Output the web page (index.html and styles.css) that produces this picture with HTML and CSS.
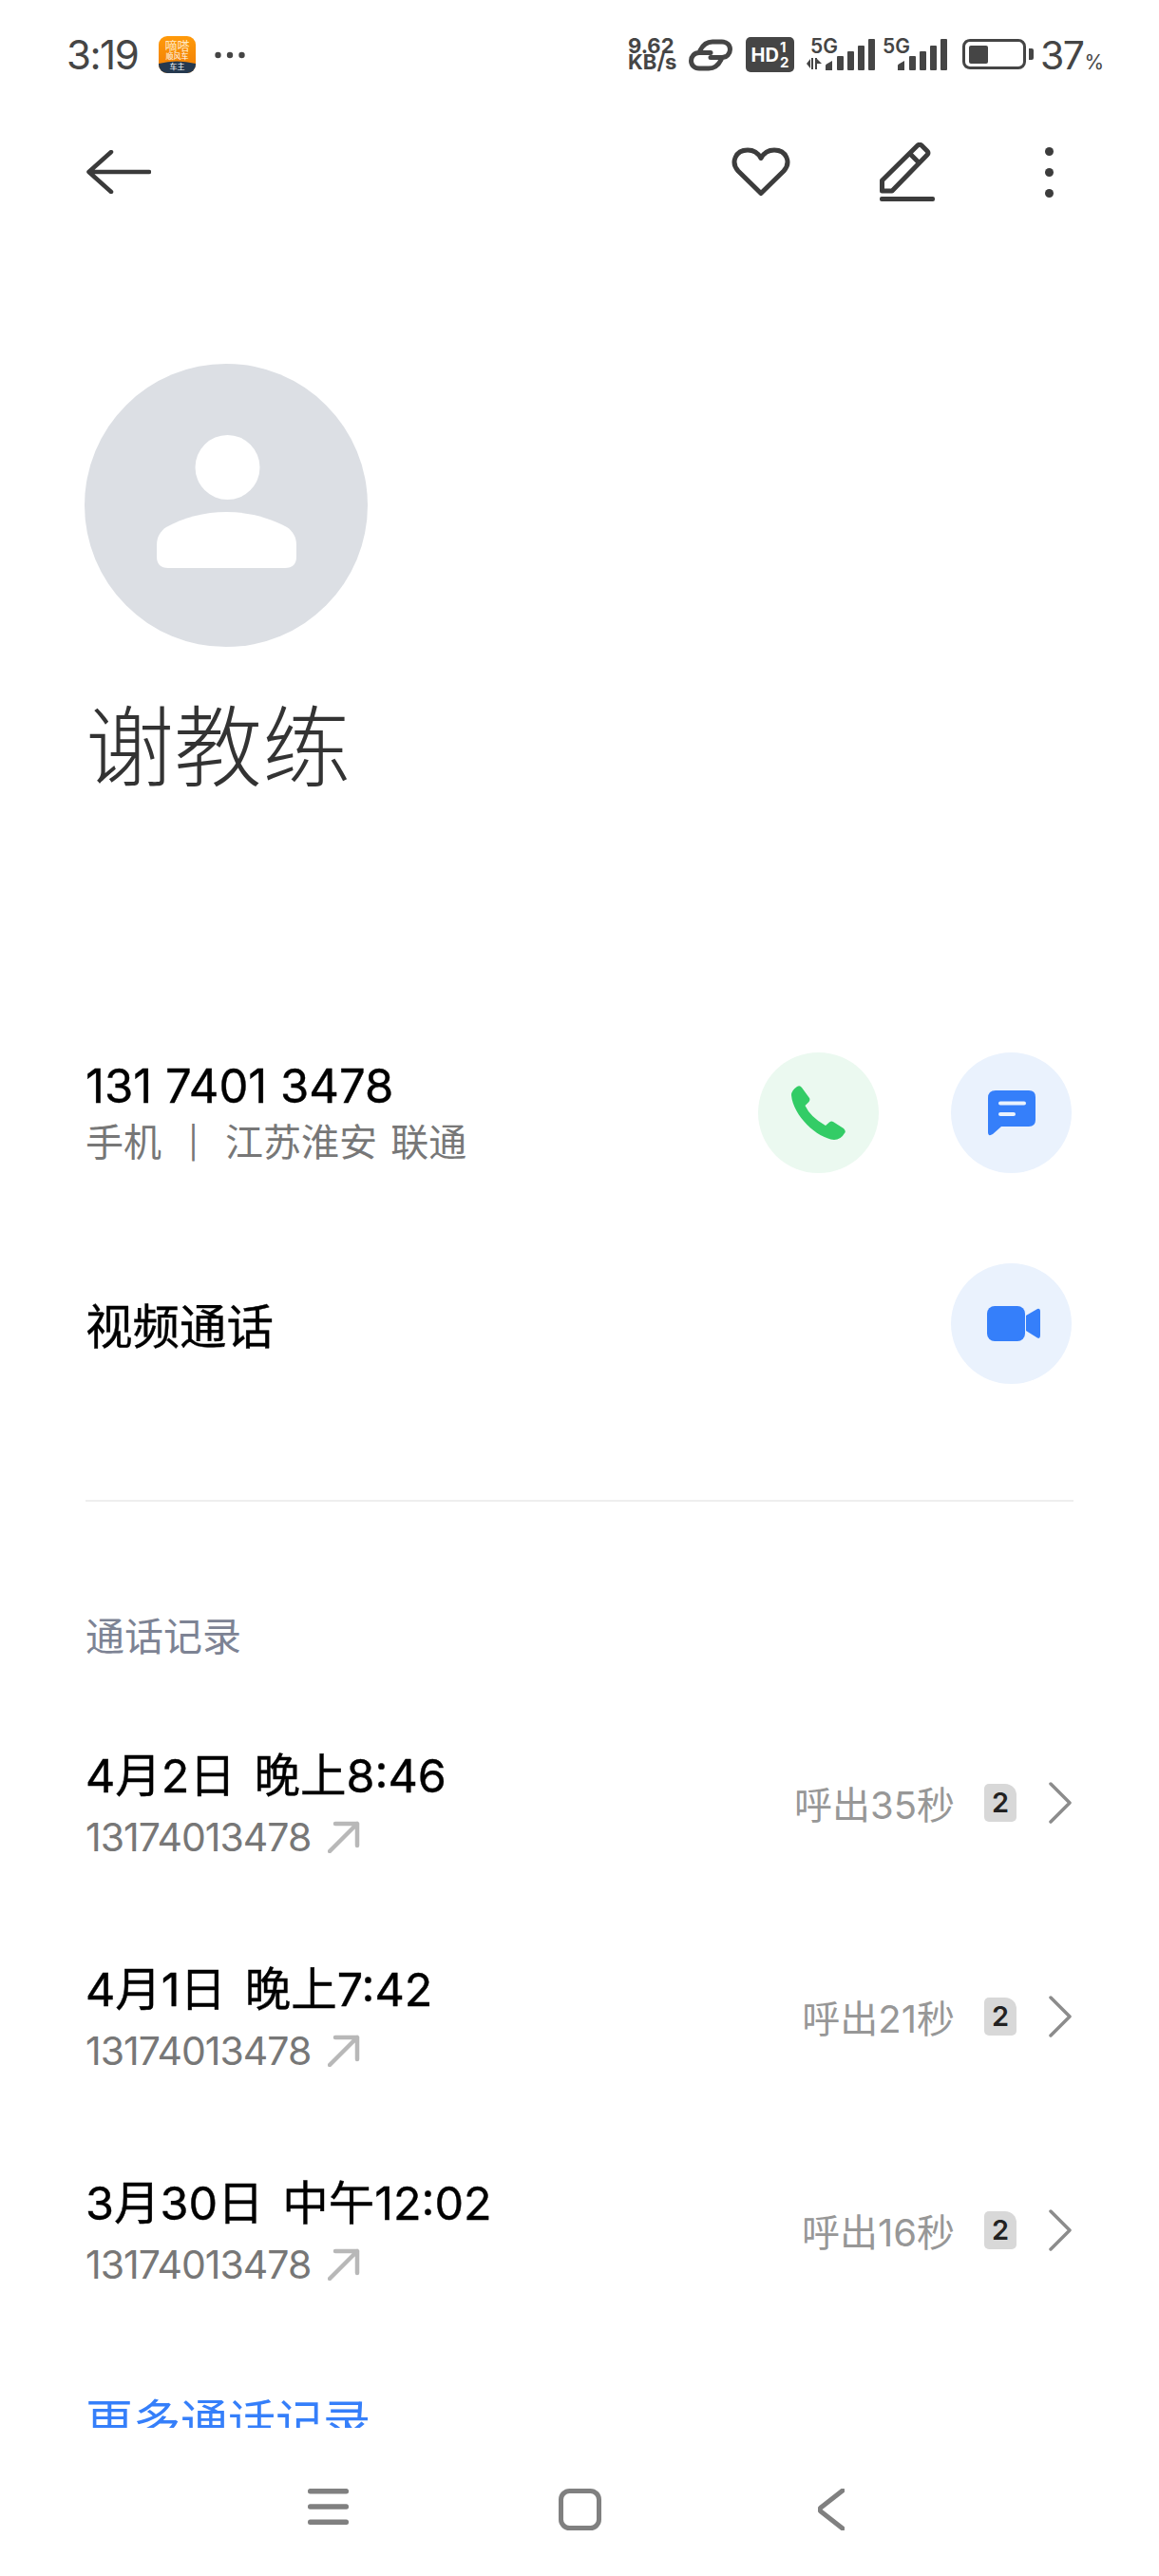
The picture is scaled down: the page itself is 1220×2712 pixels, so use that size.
FILE: index.html
```html
<!DOCTYPE html>
<html lang="zh-CN">
  <head>
    <meta charset="UTF-8">
    <title>谢教练</title>
    <link rel="stylesheet" href="styles.css">
  </head>
  <body>
    <div class="phone">

      <!-- status bar -->
      <div class="status">
        <div class="statusLeft">
          <span class="clock">3:19</span>
          <svg class="appIcon" width="39" height="39" viewBox="0 0 39 39">
            <defs>
              <linearGradient id="appBg" x1="0" y1="0" x2="0" y2="1">
                <stop offset="0" stop-color="#ff9a0a"/>
                <stop offset="1" stop-color="#ef7d04"/>
              </linearGradient>
              <clipPath id="appClip"><rect width="39" height="39" rx="9"/></clipPath>
            </defs>
            <g clip-path="url(#appClip)">
              <rect width="39" height="39" fill="url(#appBg)"/>
              <path d="M0 29 Q19 24 39 29 V39 H0Z" fill="#25394f"/>
            </g>
            <text class="appText" x="19.500" y="15" font-size="13" fill="#ffe9c4">嘀嗒</text>
            <text class="appText" x="19.500" y="24" font-size="8" fill="#fff">顺风车</text>
            <text class="appText" x="19.500" y="35" font-size="8" fill="#fff">车主</text>
          </svg>
          <svg class="moreDots" width="32" height="8" viewBox="0 0 32 8" fill="#454545">
            <circle cx="3.500" cy="4" r="3.200"/><circle cx="16" cy="4" r="3.200"/><circle cx="28.500" cy="4" r="3.200"/>
          </svg>
        </div>
        <div class="statusRight">
          <div class="speed">9.62 KB/s</div>
          <svg class="linkIcon" width="46" height="34" viewBox="0 0 46 34" fill="none" stroke="#454545" stroke-width="5" stroke-linecap="round">
            <path d="M12 12 C15 6 19 3 25 3 H35 C40 3 43.500 6.500 43.500 11 C43.500 15.500 40 19.500 35 19.500 H23"/>
            <path d="M34 22 C31 28 27 31 21 31 H11 C6 31 2.500 27.500 2.500 23 C2.500 18.500 6 14.500 11 14.500 H23"/>
          </svg>
          <div class="hd"><span class="hdText">HD</span><span class="hdNums"><i>1</i><i>2</i></span></div>
          <div class="sig">
            <span class="fiveG">5G</span>
            <svg class="updown" width="16" height="12" viewBox="0 0 16 12" fill="#454545">
              <path d="M0 6 L4 1 V11Z"/><rect x="5" y="0" width="2" height="12"/><rect x="9" y="0" width="2" height="12"/><path d="M11 1 L16 6 H11Z"/>
            </svg>
            <svg class="bars" width="52" height="33" viewBox="0 0 52 33" fill="#454545">
              <path d="M0 33 V28 Q0 27 1 26.500 L7 23 V33Z"/><rect x="12" y="18" width="7" height="15" rx="1"/><rect x="23" y="13" width="7" height="20" rx="1"/><rect x="34" y="7" width="7" height="26" rx="1"/><rect x="45" y="0" width="7" height="33" rx="1"/>
            </svg>
          </div>
          <div class="sig sigTwo">
            <span class="fiveG">5G</span>
            <svg class="bars" width="52" height="33" viewBox="0 0 52 33" fill="#454545">
              <path d="M0 33 V28 Q0 27 1 26.500 L7 23 V33Z"/><rect x="12" y="18" width="7" height="15" rx="1"/><rect x="23" y="13" width="7" height="20" rx="1"/><rect x="34" y="7" width="7" height="26" rx="1"/><rect x="45" y="0" width="7" height="33" rx="1"/>
            </svg>
          </div>
          <div class="battery"><div class="batteryLevel"></div></div>
          <div class="batteryNub"></div>
          <div class="percent">37<small>%</small></div>
        </div>
      </div>

      <!-- toolbar -->
      <div class="toolbar">
        <svg width="68" height="46" viewBox="0 0 68 46" fill="none" stroke="#3a3a3a" stroke-width="4.500" stroke-linecap="round" stroke-linejoin="round">
          <path d="M26 2 L2.500 23 L26 44 M2.500 23 H66"/>
        </svg>
        <div class="toolbarRight">
          <svg class="heart" width="62" height="52" viewBox="0 0 62 52" fill="none" stroke="#3c3c3c" stroke-width="5" stroke-linejoin="round">
            <path d="M31 48.500 L7 25 C-1 16 4 3 17 3 C23 3 28 6 31 11.500 C34 6 39 3 45 3 C58 3 63 16 55 25 Z"/>
          </svg>
          <svg class="pencil" width="58" height="62" viewBox="0 0 58 62" fill="none" stroke="#3c3c3c" stroke-width="5" stroke-linejoin="round">
            <path d="M2.500 51 V40 L40 3 Q42 1.500 44 3 L50 9 Q52 11 50 13 L13 51 Z M32 12 L42 22"/>
            <rect x="0" y="57" width="58" height="5" rx="2" fill="#3c3c3c" stroke="none"/>
          </svg>
          <svg class="more" width="9" height="53" viewBox="0 0 9 53" fill="#3c3c3c">
            <circle cx="4.500" cy="4.500" r="4.500"/><circle cx="4.500" cy="26.500" r="4.500"/><circle cx="4.500" cy="48.500" r="4.500"/>
          </svg>
        </div>
      </div>

      <!-- scrolling part, cut off above the nav bar -->
      <div class="content">
        <div class="avatar">
          <svg class="avatarIcon" width="147" height="140" viewBox="0 0 147 140" fill="#fff">
            <circle cx="74.500" cy="34" r="34"/>
            <path d="M0 128 V116 C0 107 4 101 10 97 C28 87 50 81 73.500 81 C97 81 119 87 137 97 C143 101 147 107 147 116 V128 Q147 140 135 140 H12 Q0 140 0 128Z"/>
          </svg>
        </div>
        <h1 class="name">谢教练</h1>

        <div class="contactRow phoneRow">
          <div>
            <div class="number">131 7401 3478</div>
            <div class="numberInfo"><span>手机</span><span class="sep">|</span><span>江苏淮安 联通</span></div>
          </div>
          <div class="actions">
            <div class="circle green">
              <svg width="57" height="57" viewBox="0 0 57 57" fill="#33cc66">
                <path d="M6 1 Q9 -1 11 2 L19 13 Q20 15 18.500 17 L14.500 21 Q20 33 36 42 L40 38.500 Q42 37 44 38 L55 45 Q58 48 56 50 Q52 57 45 57 C27 55 2 32 0 10 Q0 5 6 1Z"/>
              </svg>
            </div>
            <div class="circle blue">
              <svg width="50" height="48" viewBox="0 0 50 48">
                <path fill="#357ffa" d="M8 0 H43 Q50 0 50 7 V31 Q50 38 43 38 H14 L5 46 Q0 49 0 44 V8 Q0 0 8 0Z"/>
                <path stroke="#eaf2fd" stroke-width="4" stroke-linecap="round" d="M13 13.500 H38 M13 25 H27"/>
              </svg>
            </div>
          </div>
        </div>

        <div class="contactRow videoRow">
          <div class="videoLabel">视频通话</div>
          <div class="circle blue">
            <svg class="videoIcon" width="56" height="37" viewBox="0 0 56 37" fill="#357ffa">
              <rect width="40" height="37" rx="8"/>
              <path d="M41 10 L53 3 Q56 2 56 6 V31 Q56 35 53 33.500 L41 26Z"/>
            </svg>
          </div>
        </div>

        <div class="divider"></div>

        <div class="sectionTitle">通话记录</div>

        <div class="callRow">
          <div>
            <div class="callTime">4月2日 晚上8:46</div>
            <div class="callNumber">13174013478
              <svg class="outArrow" width="34" height="34" viewBox="0 0 34 34" fill="none" stroke="#b8b8b8" stroke-width="4.500" stroke-linecap="round" stroke-linejoin="round"><path d="M2 32 L31 3 M8 3 H31 V26"/></svg>
            </div>
          </div>
          <div class="callRight">
            <span class="callResult">呼出35秒</span>
            <span class="sim">2</span>
            <svg width="24" height="44" viewBox="0 0 24 44" fill="none" stroke="#8c8c8c" stroke-width="3.500" stroke-linecap="round" stroke-linejoin="round"><path d="M2 2 L22 22 L2 42"/></svg>
          </div>
        </div>

        <div class="callRow">
          <div>
            <div class="callTime">4月1日 晚上7:42</div>
            <div class="callNumber">13174013478
              <svg class="outArrow" width="34" height="34" viewBox="0 0 34 34" fill="none" stroke="#b8b8b8" stroke-width="4.500" stroke-linecap="round" stroke-linejoin="round"><path d="M2 32 L31 3 M8 3 H31 V26"/></svg>
            </div>
          </div>
          <div class="callRight">
            <span class="callResult">呼出21秒</span>
            <span class="sim">2</span>
            <svg width="24" height="44" viewBox="0 0 24 44" fill="none" stroke="#8c8c8c" stroke-width="3.500" stroke-linecap="round" stroke-linejoin="round"><path d="M2 2 L22 22 L2 42"/></svg>
          </div>
        </div>

        <div class="callRow">
          <div>
            <div class="callTime">3月30日 中午12:02</div>
            <div class="callNumber">13174013478
              <svg class="outArrow" width="34" height="34" viewBox="0 0 34 34" fill="none" stroke="#b8b8b8" stroke-width="4.500" stroke-linecap="round" stroke-linejoin="round"><path d="M2 32 L31 3 M8 3 H31 V26"/></svg>
            </div>
          </div>
          <div class="callRight">
            <span class="callResult">呼出16秒</span>
            <span class="sim">2</span>
            <svg width="24" height="44" viewBox="0 0 24 44" fill="none" stroke="#8c8c8c" stroke-width="3.500" stroke-linecap="round" stroke-linejoin="round"><path d="M2 2 L22 22 L2 42"/></svg>
          </div>
        </div>

        <div class="moreCalls">更多通话记录</div>
      </div>

      <!-- nav bar -->
      <div class="nav">
        <div class="navItem">
          <svg width="43" height="38" viewBox="0 0 43 38" fill="#808080">
            <rect width="43" height="5.500" rx="2.500"/><rect y="16.200" width="43" height="5.500" rx="2.500"/><rect y="32.500" width="43" height="5.500" rx="2.500"/>
          </svg>
        </div>
        <div class="navItem">
          <svg width="45" height="44" viewBox="0 0 45 44" fill="none" stroke="#808080" stroke-width="5"><rect x="2.500" y="2.500" width="40" height="39" rx="9"/></svg>
        </div>
        <div class="navItem">
          <svg width="28" height="44" viewBox="0 0 28 44" fill="none" stroke="#808080" stroke-width="5" stroke-linecap="round" stroke-linejoin="round"><path d="M26 2 L3 20 Q1 22 3 24 L26 42"/></svg>
        </div>
      </div>

    </div>
  </body>
</html>
```

FILE: styles.css
```css
* {
    box-sizing: border-box;
}
body {
    margin: 0;
    background: #fff;
    font-family: Inter, "Noto Sans CJK SC", sans-serif;
}
.phone {
    width: 1220px;
    height: 2712px;
    display: flex;
    flex-direction: column;
    overflow: hidden;
}

/* status bar */
.status {
    height: 114px;
    padding: 38px 62px 0 70px;
    display: flex;
    justify-content: space-between;
    align-items: flex-start;
    color: #454545;
}
.statusLeft {
    display: flex;
    align-items: center;
    height: 39px;
}
.clock {
    font-size: 42px;
    line-height: 39px;
    width: 97px;
    letter-spacing: -1.500px;
}
.appIcon {
    flex: none;
}
.appText {
    font-family: "Noto Sans CJK SC", sans-serif;
    text-anchor: middle;
}
.moreDots {
    margin-left: 20px;
}
.statusRight {
    display: flex;
    align-items: flex-start;
    height: 40px;
}
.speed {
    width: 51px;
    font-size: 22px;
    font-weight: 700;
    line-height: 17px;
    padding-top: 2px;
}
.linkIcon {
    margin: 3px 0 0 13px;
}
.hd {
    width: 51px;
    height: 37px;
    margin: 1px 0 0 14px;
    background: #454545;
    border-radius: 5px;
    color: #fff;
    display: flex;
    align-items: center;
    justify-content: center;
    font-weight: 700;
}
.hdText {
    font-size: 20px;
}
.hdNums {
    display: flex;
    flex-direction: column;
    font-size: 15px;
    line-height: 16px;
    margin-left: 1px;
}
.hdNums i {
    font-style: normal;
}
.sig {
    position: relative;
    width: 72px;
    height: 36px;
    margin-left: 13px;
    display: flex;
    justify-content: flex-end;
    align-items: flex-end;
}
.sigTwo {
    width: 68px;
    margin-left: 8px;
}
.fiveG {
    position: absolute;
    left: 4px;
    top: 1px;
    font-size: 21px;
    line-height: 19px;
    font-weight: 600;
}
.sigTwo .fiveG {
    left: 0;
}
.updown {
    position: absolute;
    left: 0;
    bottom: 1px;
}
.battery {
    width: 67px;
    height: 32px;
    margin: 3px 0 0 16px;
    border: 3px solid #454545;
    border-radius: 8px;
    padding: 3.500px 4px;
}
.batteryLevel {
    width: 20px;
    height: 19px;
    background: #454545;
    border-radius: 2px;
}
.batteryNub {
    width: 5px;
    height: 12px;
    margin: 13px 0 0 3px;
    background: #454545;
    border-radius: 0 2px 2px 0;
}
.percent {
    width: 63px;
    margin-left: 7px;
    font-size: 41px;
    line-height: 40px;
    letter-spacing: -1.500px;
    white-space: nowrap;
}
.percent small {
    font-size: 21px;
    margin-left: 1px;
}

/* toolbar */
.toolbar {
    height: 134px;
    margin-bottom: 135px;
    padding: 0 111px 0 91px;
    display: flex;
    justify-content: space-between;
    align-items: center;
}
.toolbarRight {
    display: flex;
    align-items: center;
}
.pencil {
    margin-left: 94px;
}
.more {
    margin-left: 116px;
}

/* content */
.content {
    height: 2173px;
    overflow: hidden;
    padding: 0 90px;
}
.avatar {
    width: 298px;
    height: 298px;
    margin-left: -1px;
    border-radius: 50%;
    background: #dcdfe4;
    display: flex;
    align-items: center;
    justify-content: center;
}
.avatarIcon {
    margin-top: -8px;
}
.name {
    margin: 46px 0 0;
    font-size: 93px;
    line-height: 120px;
    font-weight: 300;
    color: #333;
    letter-spacing: 0;
}
.contactRow {
    display: flex;
    justify-content: space-between;
    align-items: center;
    padding-right: 2px;
}
.phoneRow {
    height: 127px;
    margin-top: 261px;
}
.videoRow {
    height: 127px;
    margin-top: 95px;
}
.actions {
    display: flex;
    gap: 76px;
}
.circle {
    width: 127px;
    height: 127px;
    border-radius: 50%;
    display: flex;
    align-items: center;
    justify-content: center;
}
.green {
    background: #ebf9f0;
}
.blue {
    background: #eaf2fd;
}
.videoIcon {
    margin-left: 5px;
}
.number {
    font-size: 49px;
    -webkit-text-stroke: 0.4px #000;
    line-height: 62px;
    color: #000;
    white-space: nowrap;
}
.numberInfo {
    font-size: 40px;
    line-height: 56px;
    color: #777;
    word-spacing: 3px;
    display: flex;
}
.sep {
    width: 67px;
    font-size: 33px;
    text-align: center;
}
.videoLabel {
    font-size: 49.500px;
    -webkit-text-stroke: 0.4px #000;
    color: #000;
}
.divider {
    height: 2px;
    background: #eeeeee;
    margin-top: 122px;
}
.sectionTitle {
    margin-top: 112px;
    font-size: 41px;
    line-height: 60px;
    color: #7d8394;
}
.callRow {
    height: 225px;
    display: flex;
    justify-content: space-between;
    align-items: center;
}
.sectionTitle + .callRow {
    margin-top: 36px;
}
.callTime {
    font-size: 48.500px;
    -webkit-text-stroke: 0.4px #000;
    line-height: 64px;
    color: #000;
    word-spacing: 6px;
    white-space: nowrap;
}
.callNumber {
    font-size: 41px;
    line-height: 64px;
    color: #777;
    letter-spacing: -1px;
    display: flex;
    align-items: center;
}
.outArrow {
    margin-left: 18px;
}
.callRight {
    display: flex;
    align-items: center;
    padding: 0 2px 8px 0;
}
.callResult {
    font-size: 40px;
    color: #979797;
    white-space: nowrap;
}
.sim {
    width: 34px;
    height: 40px;
    margin: 0 34px 0 31px;
    background: #d8d8d8;
    border-radius: 5px 12px 5px 5px;
    font-size: 29px;
    font-weight: 600;
    line-height: 40px;
    text-align: center;
    color: #222;
}
.moreCalls {
    margin-top: 56px;
    font-size: 50px;
    line-height: 60px;
    color: #357ffa;
}

/* nav bar */
.nav {
    flex: 1;
    display: grid;
    grid-template-columns: repeat(3, 265px);
    justify-content: center;
    padding-top: 64px;
    align-items: start;
}
.navItem {
    display: flex;
    justify-content: center;
}
```
